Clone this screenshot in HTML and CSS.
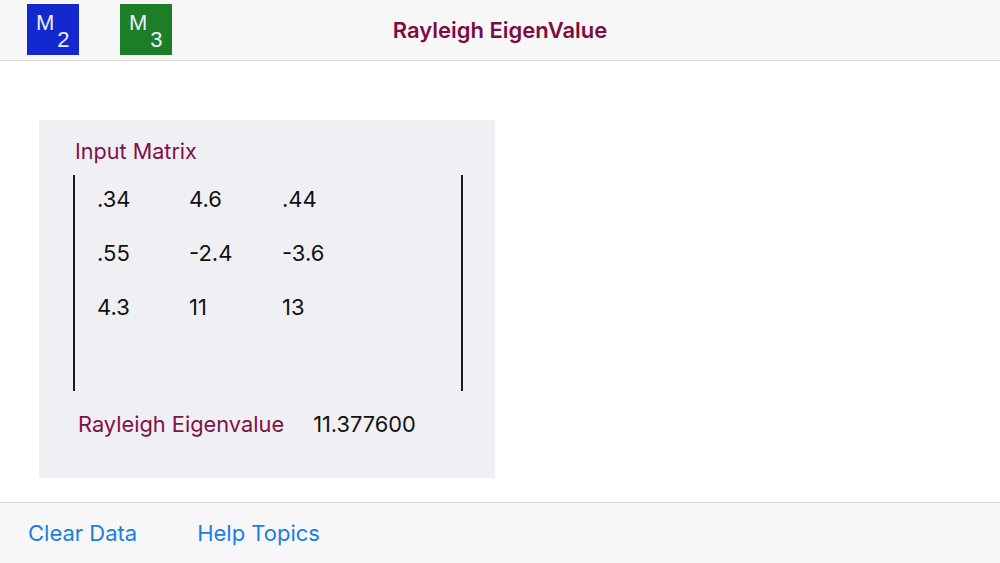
FILE: index.html
```html
<!DOCTYPE html>
<html lang="en">

<head>
  <meta charset="UTF-8">
  <meta name="viewport" content="width=device-width, initial-scale=1.0">
  <title>Rayleigh EigenValue</title>
  <link rel="stylesheet" href="styles.css">
</head>

<body>
  <div class="header">
    <div class="size-buttons">
      <div class="size-btn blue">M<sub>2</sub></div>
      <div class="size-btn green">M<sub>3</sub></div>
    </div>
    <h1 class="title">Rayleigh EigenValue</h1>
    <div></div>
  </div>

  <div class="content">
    <div class="panel">
      <div class="panel-label">Input Matrix</div>

      <!-- matrix between two bars -->
      <div class="matrix">
        <div class="cell">.34</div>
        <div class="cell">4.6</div>
        <div class="cell">.44</div>
        <div class="cell">.55</div>
        <div class="cell">-2.4</div>
        <div class="cell">-3.6</div>
        <div class="cell">4.3</div>
        <div class="cell">11</div>
        <div class="cell">13</div>
      </div>

      <div class="result">
        <span class="result-label">Rayleigh Eigenvalue</span>
        <span class="result-value">11.377600</span>
      </div>
    </div>
  </div>

  <div class="footer">
    <a class="footer-link link-clear" href="#">Clear Data</a>
    <a class="footer-link" href="#">Help Topics</a>
  </div>
</body>

</html>
```

FILE: styles.css
```css
* {
  margin: 0;
  padding: 0;
  box-sizing: border-box;
}

body {
  font-family: Inter, 'Liberation Sans', sans-serif;
  background: white;
  width: 1000px;
  height: 563px;
  overflow: hidden;
}

.header {
  height: 61px;
  background: #f7f7f7;
  border-bottom: 1px solid #d6d6d6;
  display: grid;
  grid-template-columns: 1fr auto 1fr;
  align-items: center;
}

.size-buttons {
  display: flex;
  gap: 41px;
  padding-left: 27px;
  margin-top: -2px;
}

.size-btn {
  width: 52px;
  height: 51px;
  color: #eef0ff;
  font-family: 'Liberation Sans', Arial, sans-serif;
  font-size: 22px;
  line-height: 22px;
  padding: 8px 0 0 9px;
  cursor: pointer;
}

.size-btn sub {
  font-size: 22px;
  line-height: 22px;
  vertical-align: -17px;
  margin-left: 3px;
}

.size-btn.blue {
  background: #1428cf;
}

.size-btn.green {
  background: #1d7e28;
}

.title {
  font-size: 22px;
  font-weight: 600;
  color: #7c0c44;
  margin-top: -1px;
}

.content {
  height: 441px;
  padding: 59px 0 0 39px;
}

.panel {
  width: 456px;
  height: 358px;
  background: #efeff4;
  padding: 18px 0 0 34px;
}

.panel-label {
  font-size: 21.6px;
  line-height: 26px;
  color: #7f1148;
  margin-left: 2px;
  height: 37px;
}

.matrix {
  width: 390px;
  height: 216px;
  border-left: 2px solid #1c1c1c;
  border-right: 2px solid #1c1c1c;
  display: grid;
  grid-template-columns: 92px 93px 1fr;
  grid-auto-rows: 48px;
  row-gap: 6px;
  padding-left: 22px;
  align-content: start;
}

.cell {
  font-size: 22px;
  line-height: 48px;
  color: #111;
}

.result {
  display: flex;
  gap: 29px;
  margin: 20px 0 0 5px;
  font-size: 21.8px;
  line-height: 26px;
}

.result-label {
  color: #7f1148;
}

.result-value {
  color: #111;
}

.footer {
  height: 61px;
  background: #f7f7f7;
  border-top: 1px solid #d6d6d6;
  display: flex;
  align-items: center;
  gap: 60px;
  padding-left: 28px;
}

.footer-link {
  font-size: 22px;
  color: #1a7ee4;
  text-decoration: none;
}
```
